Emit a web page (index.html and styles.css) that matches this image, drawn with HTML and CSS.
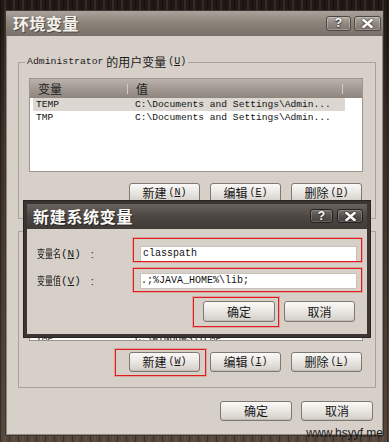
FILE: index.html
```html
<!DOCTYPE html>
<html lang="zh-CN">
<head>
<meta charset="utf-8">
<title>环境变量</title>
<link rel="stylesheet" href="styles.css">
</head>
<body>
<div class="window">
  <div class="titlebar">
    <span class="title">环境变量</span>
    <div class="tb-buttons">
      <span class="tb-btn tb-help">?</span>
      <span class="tb-btn tb-close"><svg width="11" height="9" viewBox="0 0 11 9"><path d="M1.5 1 L9.5 8 M9.5 1 L1.5 8" stroke="#fff" stroke-width="2.4" stroke-linecap="square"/></svg></span>
    </div>
  </div>
  <div class="content">
    <fieldset class="group">
      <legend><span class="mono">Administrator</span> 的用户变量<span class="key">(<u>U</u>)</span></legend>
      <div class="list">
        <div class="list-head"><span class="hcol1">变量</span><span class="sep"></span><span class="hcol2">值</span><span class="sep"></span></div>
        <div class="row selected"><span class="col1">TEMP</span><span class="col2">C:\Documents and Settings\Admin...</span></div>
        <div class="row"><span class="col1">TMP</span><span class="col2">C:\Documents and Settings\Admin...</span></div>
      </div>
      <div class="btn-row">
        <button class="btn">新建<span class="key">(<u>N</u>)</span></button>
        <button class="btn">编辑<span class="key">(<u>E</u>)</span></button>
        <button class="btn">删除<span class="key">(<u>D</u>)</span></button>
      </div>
    </fieldset>
    <fieldset class="group group2">
      <legend class="legend-covered"></legend>
      <div class="list">
        <div class="list-head"><span class="hcol1"></span><span class="sep"></span><span class="hcol2"></span><span class="sep"></span></div>
        <div class="row"></div>
        <div class="row"></div>
        <div class="row"></div>
        <div class="row"></div>
        <div class="row"></div>
        <div class="row"><span class="col1">TMP</span><span class="col2">C:\WINDOWS\TEMP</span></div>
      </div>
      <div class="btn-row">
        <span class="mark mark-new"><button class="btn">新建<span class="key">(<u>W</u>)</span></button></span>
        <button class="btn">编辑<span class="key">(<u>I</u>)</span></button>
        <button class="btn">删除<span class="key">(<u>L</u>)</span></button>
      </div>
    </fieldset>
    <div class="dialog-buttons">
      <button class="btn btn-wide">确定</button>
      <button class="btn btn-wide">取消</button>
    </div>
  </div>
</div>

<div class="modal">
  <div class="modal-titlebar">
    <span class="modal-title">新建系统变量</span>
    <div class="tb-buttons">
      <span class="tb-btn dark tb-help2">?</span>
      <span class="tb-btn dark tb-close2"><svg width="11" height="9" viewBox="0 0 11 9"><path d="M1.5 1 L9.5 8 M9.5 1 L1.5 8" stroke="#fff" stroke-width="2.4" stroke-linecap="square"/></svg></span>
    </div>
  </div>
  <div class="modal-body">
    <div class="form">
      <label class="lbl"><span class="narrow">变量名</span><span class="lkey">(<u>N</u>)</span><span class="colon">:</span></label>
      <span class="mark mark-in1"><span class="input">classpath</span></span>
      <label class="lbl"><span class="narrow">变量值</span><span class="lkey">(<u>V</u>)</span><span class="colon">:</span></label>
      <span class="mark mark-in2"><span class="input input2">.;%JAVA_HOME%\lib;</span></span>
    </div>
    <div class="modal-buttons">
      <span class="mark mark-ok"><button class="btn btn-m">确定</button></span>
      <button class="btn btn-m btn-m2">取消</button>
    </div>
  </div>
</div>

<div class="watermark">www.hsyyf.me</div>
</body>
</html>
```

FILE: styles.css
```css
* { box-sizing: border-box; }
html, body { margin: 0; }
html { background: #3d3129; }
body {
  width: 389px;
  height: 442px;
  overflow: hidden;
  position: relative;
  padding: 10px 5px 0 5px;
  font-family: "Noto Sans CJK SC", sans-serif;
  color: #1b1b1b;
  background-color: #3d3129;
  background-image:
    repeating-linear-gradient(90deg, rgba(0,0,0,.35) 0 1px, transparent 1px 4px, rgba(130,105,85,.22) 4px 6px, transparent 6px 9px),
    linear-gradient(#1f1814, #3a2e26 30%, #55473c 100%);
}

.window {
  width: 379px;
  height: 426px;
  border: 1px solid #3b3531;
  background: #d6d0c9;
  box-shadow: inset 0 0 0 1px #8f8780;
  display: flex;
  flex-direction: column;
}

.titlebar {
  height: 25px;
  flex: none;
  display: flex;
  align-items: center;
  justify-content: space-between;
  padding: 0 2px 1px 7px;
  background: linear-gradient(#aaa29a, #8d847c 45%, #786f68);
}
.title {
  font-size: 16px;
  font-weight: bold;
  letter-spacing: 0.5px;
  color: #f5f2ee;
  text-shadow: 1px 1px 0 rgba(40,30,25,.55);
}
.tb-buttons { display: flex; gap: 3px; }
.tb-btn {
  height: 15px;
  display: flex;
  align-items: center;
  justify-content: center;
  border: 1px solid #4e4743;
  border-radius: 3px;
  background: linear-gradient(#b3aba4, #918881 50%, #7d756e);
  box-shadow: inset 0 0 0 1px rgba(255,255,255,.25);
  color: #fff;
  font: bold 12px "Liberation Sans", sans-serif;
  text-shadow: 0 0 2px #222, 0 1px 0 #333;
}
.tb-help { width: 25px; }
.tb-close { width: 27px; }
.tb-btn svg { filter: drop-shadow(0 0 1px #222); }

.content {
  flex: 1;
  padding: 19px 7px 0 12px;
  display: flex;
  flex-direction: column;
}

.group {
  margin: 0;
  border: 1px solid #a8a29a;
  padding: 9px 12px 15px 10px;
  min-width: 0;
}
.group2 { margin-top: 5px; }
legend {
  height: 14px;
  font-size: 12px;
  line-height: 14px;
  padding: 0 2px;
  margin-left: -4px;
  color: #1b1b1b;
  white-space: nowrap;
}
.legend-covered { width: 70px; }
legend span { line-height: 14px; vertical-align: top; }
.mono { font-family: "Liberation Mono", monospace; font-size: 9.8px; }
.key { font-family: "Liberation Mono", monospace; font-size: 10px; margin-left: 2px; }

.list {
  height: 94px;
  border: 1px solid #9c958e;
  background: #fff;
  overflow: hidden;
}
.list-head {
  height: 19px;
  display: flex;
  align-items: center;
  background: linear-gradient(#bab3ac, #a29a92 50%, #8e867e);
  font-size: 12px;
  line-height: 19px;
  color: #1e1e1e;
}
.hcol1 { width: 97px; padding-left: 8px; }
.hcol2 { width: 214px; padding-left: 8px; }
.sep { width: 1px; height: 10px; background: #d2ccc6; flex: none; }

.row {
  display: flex;
  width: 312px;
  margin-left: 3px;
  height: 13px;
  font-family: "Liberation Mono", monospace;
  font-size: 9.6px;
  line-height: 13px;
  color: #111;
  white-space: nowrap;
}
.row.selected { background: #dcd7d1; }
.col1 { width: 96px; padding-left: 3px; overflow: hidden; }
.col2 { padding-left: 6px; }

.btn-row {
  display: flex;
  justify-content: flex-end;
  gap: 10px;
  margin-top: 11px;
  padding-right: 1px;
}
.btn {
  width: 71px;
  height: 20px;
  padding: 0;
  margin: 0;
  border: 1px solid #7f7974;
  border-radius: 3px;
  background: linear-gradient(#faf9f7, #ebe8e4 45%, #d3cec8);
  box-shadow: inset 0 -1px 0 #c2bcb5;
  font-family: "Noto Sans CJK SC", sans-serif;
  font-size: 12px;
  line-height: 18px;
  color: #151515;
  display: flex;
  align-items: center;
  justify-content: center;
}
.btn-wide { width: 72px; }
.dialog-buttons {
  display: flex;
  justify-content: flex-end;
  gap: 9px;
  margin-top: 13px;
  padding-right: 3px;
}

.mark { position: relative; display: block; }
.mark::after {
  content: "";
  position: absolute;
  border: 1px solid #e21c1c;
  box-shadow: 0 0 0 1px rgba(225,60,60,.3);
  pointer-events: none;
}
.mark-new::after { left: -14px; right: -6px; top: -3px; bottom: -4px; }
.mark-ok::after { left: -10px; right: -4px; top: -4px; bottom: -5px; }
.mark-in1::after { left: -7px; right: -5px; top: -8px; bottom: 0; }
.mark-in2::after { left: -7px; right: -5px; top: -5px; bottom: -3px; }

.modal {
  position: absolute;
  left: 24px;
  top: 201px;
  width: 346px;
  height: 136px;
  border: 3px solid #3b3633;
  box-shadow: 0 0 0 1px #29241f;
  background: #d6d0c9;
  display: flex;
  flex-direction: column;
}
.modal-titlebar {
  height: 25px;
  flex: none;
  display: flex;
  align-items: center;
  justify-content: space-between;
  padding: 0 4px 1px 6px;
  background: linear-gradient(#69625d, #4d4743 50%, #413b38);
}
.modal-title {
  font-size: 16px;
  font-weight: bold;
  letter-spacing: 0.7px;
  color: #fbfaf8;
  text-shadow: 1px 1px 0 rgba(0,0,0,.5);
}
.modal-titlebar .tb-buttons { gap: 4px; }
.tb-btn.dark {
  height: 14px;
  border-color: #252220;
  background: linear-gradient(#77706b, #57514d 50%, #47423e);
  box-shadow: inset 0 0 0 1px rgba(255,255,255,.18);
}
.tb-help2 { width: 23px; }
.tb-close2 { width: 26px; }

.modal-body {
  padding: 17px 10px 12px 10px;
}
.form {
  display: grid;
  grid-template-columns: 103px 217px;
  row-gap: 11px;
  align-items: center;
}
.lbl {
  display: flex;
  align-items: center;
  height: 16px;
  color: #1b1b1b;
  white-space: nowrap;
}
.narrow {
  display: inline-block;
  width: 24px;
  font-size: 8px;
  line-height: 10px;
  transform: scaleY(1.35);
}
.lkey { font-family: "Liberation Mono", monospace; font-size: 11px; line-height: 14px; }
.colon { margin-left: 10px; font-family: "Liberation Sans", sans-serif; font-size: 11px; line-height: 14px; }
.input {
  display: block;
  height: 16px;
  background: #fff;
  border: 1px solid #c8c2bb;
  font-family: "Liberation Mono", monospace;
  font-size: 10px;
  line-height: 14px;
  padding-left: 2px;
  color: #111;
}
.input2 { padding-left: 0; }

.modal-buttons {
  display: flex;
  justify-content: flex-end;
  gap: 9px;
  margin-top: 12px;
  padding-right: 2px;
}
.btn-m { width: 72px; height: 21px; }
.btn-m2 { width: 71px; }

.watermark {
  position: absolute;
  right: 6px;
  bottom: 2px;
  font-family: "Liberation Sans", sans-serif;
  font-size: 12px;
  line-height: 13px;
  color: #1a1a1a;
}
```
